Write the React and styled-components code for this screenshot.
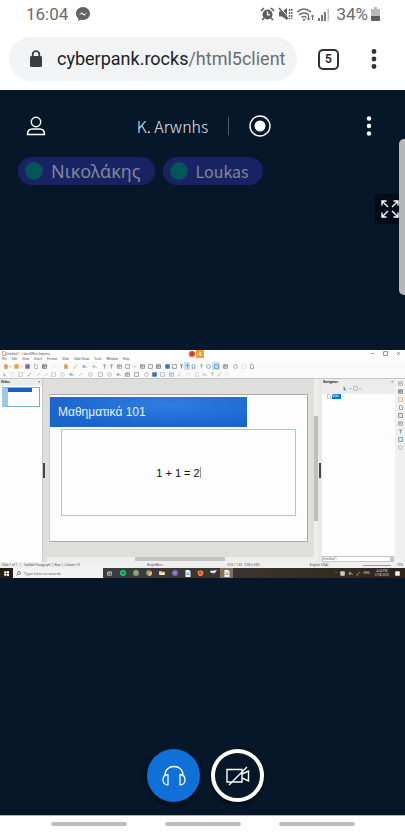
import React from "react";
import styled, { createGlobalStyle } from "styled-components";

const GlobalStyle = createGlobalStyle`
  * { box-sizing: border-box; }
  body { margin: 0; background: #fff; font-family: Roboto, sans-serif; }
  button, input, select { font: inherit; color: inherit; border: 0; padding: 0; margin: 0; background: none; }
  button { cursor: pointer; display: flex; align-items: center; justify-content: center; }
  svg { display: block; flex: none; }
`;

/* ---------- phone shell ---------- */

const Phone = styled.div`
  display: flex;
  flex-direction: column;
  min-height: 100vh;
`;

const StatusBar = styled.div`
  display: flex;
  align-items: center;
  height: 28px;
  padding: 0 25px 0 26px;
  color: #6a6a6a;
  font-size: 17px;
  line-height: 28px;
`;

const Clock = styled.time`
  margin-right: 8px;
`;

const StatusIcons = styled.div`
  display: flex;
  align-items: center;
  gap: 3px;
  margin-left: auto;
`;

const Battery = styled.span`
  margin: 0 0 0 3px;
`;

const BrowserBar = styled.header`
  display: flex;
  align-items: center;
  height: 62px;
  padding: 0 25px 0 9px;
  color: #303134;
`;

const UrlPill = styled.div`
  display: flex;
  align-items: center;
  flex: 1;
  min-width: 0;
  height: 44px;
  padding: 0 6px 0 20px;
  gap: 14px;
  border-radius: 22px;
  background: #f1f3f4;
`;

const Url = styled.a`
  flex: 1;
  min-width: 0;
  white-space: nowrap;
  font-size: 18px;
  line-height: 24px;
  color: #202124;
  text-decoration: none;
`;

const UrlPath = styled.span`
  color: #6b6e72;
`;

const TabCount = styled.button`
  width: 21px;
  height: 21px;
  && { margin: 0 29px 0 21px; border: 2px solid #303134; font-size: 12px; font-weight: 700; }
  border-radius: 5px;
  line-height: 17px;
`;

const MenuButton = styled.button`
  width: 12px;
  height: 28px;
`;

const NavBar = styled.nav`
  display: flex;
  align-items: center;
  justify-content: center;
  gap: 38px;
  height: 18px;
  padding-bottom: 1px;
  border-top: 1px solid #aeb4bc;
`;

const NavHandle = styled.button`
  && { background: #bdbdbd; }
  width: 76px;
  height: 4px;
  border-radius: 2px;
`;

/* ---------- conference ---------- */

const Conference = styled.main`
  position: relative;
  display: flex;
  flex-direction: column;
  flex: 1;
  background: #061729;
  color: #fff;
`;

const TopBar = styled.div`
  display: flex;
  align-items: center;
  justify-content: space-between;
  height: 67px;
  padding: 5px 29px 0 25px;
`;

const IconButton = styled.button`
  width: ${(p) => p.$size}px;
  height: ${(p) => p.$size}px;
`;

const RoomTitle = styled.div`
  display: flex;
  align-items: center;
`;

const RoomName = styled.h1`
  margin: 0;
  font: 300 16px/24px "Noto Sans CJK SC", "Noto Sans", sans-serif;
  color: #e4e8ec;
`;

const Divider = styled.span`
  width: 1px;
  height: 18px;
  margin: 0 19px 0 20px;
  background: #4b5866;
`;

const Talkers = styled.div`
  display: flex;
  gap: 8px;
  padding-left: 18px;
`;

const Talker = styled.button`
  && {
    padding: 0 14px 0 7px;
    background: #182363;
    color: #7e8798;
    font: ${(p) => (p.$greek ? '400 18px/28px "Noto Sans"' : '400 16px/28px "Noto Sans CJK SC"')}, sans-serif;
  }
  gap: 8px;
  height: 28px;
  border-radius: 14px;
`;

const TalkDot = styled.span`
  width: 18px;
  height: 18px;
  border-radius: 50%;
  background: #045459;
`;

const Stage = styled.section`
  display: flex;
  flex-direction: column;
  flex: 1;
`;

const FullscreenButton = styled.button`
  && { margin: 9px 0 126px; background: #020b17; }
  align-self: flex-end;
  width: 30px;
  height: 30px;
  border-radius: 4px;
`;

const ScrollThumb = styled.div`
  position: absolute;
  top: 49px;
  right: 0;
  width: 6px;
  height: 156px;
  border-radius: 5px 0 0 5px;
  background: #b5b7bb;
`;

const Actions = styled.footer`
  display: flex;
  justify-content: center;
  gap: 11px;
  margin-top: auto;
  padding: 0 0 13px 6px;
`;

const ActionButton = styled.button`
  width: 53px;
  height: 53px;
  border-radius: 50%;
  && {
    background: ${(p) => (p.$primary ? "#0f70d7" : "#061729")};
    border: ${(p) => (p.$primary ? "0" : "4px solid #fff")};
  }
  box-shadow: 0 2px 4px #000a;
`;

/* ---------- shared desktop ---------- */

const Desktop = styled.div`
  display: flex;
  flex-direction: column;
  background: #fdfdfd;
  color: #444;
  font: 3px/6px "Noto Sans", sans-serif;
`;

const TitleRow = styled.div`
  display: flex;
  align-items: center;
  height: 7px;
  padding: 0 4px 0 1px;
`;

const WindowTitle = styled.span`
  flex: 1;
`;

const SharingBadge = styled.span`
  display: flex;
  flex: 1;
`;

const BadgePart = styled.span`
  display: flex;
  align-items: center;
  justify-content: center;
  width: 8px;
  height: 8px;
  color: #fff;
  font: 700 5px/8px "Noto Sans", sans-serif;
  background: ${(p) => p.$color};
`;

const WindowControls = styled.span`
  display: flex;
  gap: 8px;
`;

const MenuRow = styled.div`
  display: flex;
  gap: 5px;
  height: 5px;
  padding-left: 2px;
  line-height: 5px;
`;

const MenuItem = styled.button`
  line-height: 5px;
`;

const ToolRow = styled.div`
  display: flex;
  align-items: center;
  height: 8px;
  padding-left: 2px;
  background: #fafafa;
`;

const Tool = styled.button`
  width: ${(p) => p.$width}px;
  height: 8px;
  && { background: ${(p) => (p.$active ? "#c6e0f5" : "none")}; }
`;

const Workspace = styled.div`
  display: flex;
  height: 184px;
  border-top: 1px solid #c4c6c7;
  background: #dededd;
`;

const SlidePanel = styled.aside`
  width: 43px;
  background: #fdfdfd;
  border-right: 1px solid #cacaca;
`;

const PanelTitle = styled.div`
  display: flex;
  justify-content: space-between;
  height: 7px;
  padding: 0 2px 0 1px;
  background: #ececec;
  color: #222;
  font-weight: 700;
  line-height: 7px;
`;

const Thumb = styled.button`
  width: 38px;
  height: 20px;
  && {
    margin: 1px 0 0 2px;
    background: #fff;
    border: 1px solid #7aaec7;
    border-left: 6px solid #9dc8e5;
  }
  align-items: flex-start;
  justify-content: flex-start;
`;

const ThumbTitle = styled.span`
  width: 24px;
  height: 4px;
  background: #1760c7;
`;

const Canvas = styled.div`
  display: flex;
  flex-direction: column;
  flex: 1;
  padding: 15px 6px 0 2px;
`;

const Slide = styled.article`
  height: 148px;
  padding: 2px 11px 0 0;
  background: #fdfdfd;
  border: 1px solid #aaa;
  border-left-color: #ccc;
`;

const SlideTitle = styled.h2`
  width: 80%;
  height: 30px;
  margin: 0;
  padding-left: 8px;
  background: radial-gradient(ellipse at 60% 25%, #2f7de1, #1965cb 75%);
  color: #e6f2ff;
  font: 400 12px/30px "Liberation Sans", sans-serif;
`;

const SlideBody = styled.div`
  display: flex;
  align-items: center;
  justify-content: center;
  height: 87px;
  margin: 2px 0 0 11px;
  border: 1px solid #9fcbe4;
  color: #111;
  font: 400 11px/16px "Liberation Sans", sans-serif;
`;

const Caret = styled.span`
  width: 1px;
  height: 11px;
  background: #999;
`;

const HorizontalTrack = styled.div`
  height: 5px;
  margin: auto -6px 0 -2px;
  padding-left: 88px;
  background: #eeeeed;
`;

const HorizontalThumb = styled.div`
  width: 90px;
  height: 4px;
  background: #c3c3c3;
`;

const VerticalTrack = styled.div`
  width: 4px;
  padding-top: 37px;
  background: #eeeeed;
`;

const VerticalThumb = styled.div`
  height: 105px;
  background: #bfbfbf;
`;

const Splitter = styled.div`
  display: flex;
  align-items: center;
  justify-content: ${(p) => (p.$panel ? "flex-start" : "center")};
  width: 4px;
  background: ${(p) => (p.$panel ? "#dededd" : "#e8e8e8")};
`;

const Grip = styled.span`
  width: 2px;
  height: 15px;
  background: #444;
`;

const NavigatorPanel = styled.aside`
  display: flex;
  flex-direction: column;
  width: 73px;
  background: #ececec;
`;

const NavTools = styled.div`
  display: flex;
  justify-content: center;
  height: 8px;
  padding-right: 12px;
`;

const NavTree = styled.div`
  display: flex;
  gap: 1px;
  flex: 1;
  padding: 0 0 0 4px;
  background: #fdfdfd;
`;

const TreeItem = styled.span`
  width: 9px;
  height: 5px;
  background: #0878d0;
  color: #fff;
  line-height: 5px;
`;

const DocumentSelect = styled.select`
  appearance: none;
  width: 72px;
  height: 6px;
  && { border: 1px solid #c6c6c6; border-right-width: 4px; background: #fff; }
  line-height: 4px;
`;

const Sidebar = styled.aside`
  display: flex;
  flex-direction: column;
  align-items: center;
  gap: 3px;
  width: 10px;
  padding-top: 2px;
  background: #f0f0f0;
`;

const DocStatus = styled.div`
  display: grid;
  grid-template-columns: 145fr 80fr 82fr 53fr 34fr 8fr;
  align-items: center;
  height: 6px;
  padding-left: 2px;
  background: #efefef;
`;

const Zoom = styled.span`
  height: 1px;
  margin-right: 6px;
  background: #999;
`;

const TaskBar = styled.div`
  display: flex;
  align-items: center;
  height: 10px;
  background: linear-gradient(90deg, #393d41 25%, #3b342c 60%, #2f2419);
  color: #ddd;
`;

const StartButton = styled.button`
  width: 13px;
  height: 10px;
  && { background: #251d18; }
`;

const SearchBox = styled.label`
  display: flex;
  align-items: center;
  gap: 3px;
  width: 90px;
  height: 10px;
  padding-left: 3px;
  background: #f2f2f2;
  color: #555;
`;

const SearchInput = styled.input`
  width: 60px;
  height: 8px;
  && { font-size: 4px; }
  &::placeholder { color: #555; opacity: 1; }
`;

const TaskButton = styled.button`
  width: 13px;
  height: 10px;
  && { background: ${(p) => (p.$active ? "#80705f" : "none")}; }
`;

const Tray = styled.div`
  display: flex;
  align-items: center;
  gap: 3px;
  margin-left: auto;
  padding-right: 5px;
`;

const TrayClock = styled.time`
  margin: 0 3px 0 2px;
  line-height: 4px;
  text-align: center;
`;

/* ---------- drawings ---------- */

const Kebab = ({ color, radius }) => (
  <svg width="6" height="22" viewBox="0 0 6 22" fill={color}>
    {[3.5, 11, 18.5].map((y) => <circle key={y} cx="3" cy={y} r={radius} />)}
  </svg>
);

const Messenger = () => (
  <svg width="14" height="14" viewBox="0 0 14 14">
    <path fill="#626262" d="M7 0C3 0 0 3 0 6.600c0 2 .9 3.700 2.300 4.900V14l2.300-1.200c.8.2 1.600.3 2.400.3 4 0 7-2.900 7-6.500S11 0 7 0z" />
    <path d="m2.700 8.500 3.100-3.200 2.300 2 3.200-1.800-3.100 3.200-2.300-2z" fill="#fff" />
  </svg>
);

const Alarm = () => (
  <svg width="15" height="14" viewBox="0 0 15 14" fill="none">
    <circle cx="7.500" cy="7.500" r="5" fill="#5e5e5e" />
    <path d="M1 4 4 1M11 1l3 3M4 11l-2 2M11 11l2 2" stroke="#5e5e5e" strokeWidth="1.700" />
    <path d="M7.500 4.500v3.300H10" stroke="#fff" strokeWidth="1.300" />
  </svg>
);

const Muted = () => (
  <svg width="15" height="14" viewBox="0 0 15 14" fill="none" stroke="#606060">
    <path d="M1 4.500h3L9 1v12L4 9.500H1z" fill="#606060" stroke="none" />
    <path d="m2 0 9 11" stroke="#fff" strokeWidth="1" />
    <path d="m1 1 9 11" strokeWidth="1.500" />
    <path d="M11.500 2v10M13.800 2v10" strokeWidth="1.400" strokeDasharray="2 1" />
  </svg>
);

const Wifi = () => (
  <svg width="19" height="15" viewBox="0 0 19 15" fill="none" stroke="#696969" strokeWidth="1.500">
    <path d="M1 5q7-6 14 0M3 8q5-4 10 0M5.500 10.500q2.500-2 5 0" />
    <path d="m6.500 12.500 1.500-1 1.500 1L8 14z" fill="#696969" stroke="none" />
    <path d="M12.500 8v5m-1.700-1.800 1.700 1.800 1.600-1.800M16.500 13V8m-1.700 1.800L16.500 8l1.600 1.800" strokeWidth="1" />
  </svg>
);

const Signal = () => (
  <svg width="12" height="13" viewBox="0 0 12 13" fill="#777">
    <path d="M0 10h2v3H0zM3 7h2v6H3zM6 4h2v9H6z" />
    <path d="M9.500 1h1.500v12H9.500z" fill="#bbb" />
  </svg>
);

const BatteryIcon = () => (
  <svg width="9" height="14" viewBox="0 0 9 14">
    <path fill="#b9b9b9" d="M3 0h3v2h3v7H0V2h3z" />
    <path fill="#5d5d5d" d="M0 9h9v4q0 1-1 1H1q-1 0-1-1z" />
  </svg>
);

const Lock = () => (
  <svg width="14" height="18" viewBox="0 0 14 18">
    <rect x="1" y="6" width="12" height="11" rx="1.500" fill="#393c40" />
    <path d="M3.700 7V4.500a3.300 3.300 0 0 1 6.600 0V7" fill="none" stroke="#393c40" strokeWidth="1.800" />
  </svg>
);

const User = () => (
  <svg width="20" height="20" viewBox="0 0 20 20" fill="none" stroke="#fff" strokeWidth="1.500">
    <circle cx="10" cy="6" r="4.700" />
    <path d="M1.500 18.500q0-5.500 5-5.500h7q5 0 5 5.500z" />
  </svg>
);

const Record = () => (
  <svg width="22" height="22" viewBox="0 0 22 22">
    <circle cx="11" cy="11" r="10" fill="none" stroke="#fff" strokeWidth="1.400" />
    <circle cx="11" cy="11" r="5.500" fill="#fff" />
  </svg>
);

const Expand = () => (
  <svg width="20" height="20" viewBox="0 0 20 20" fill="none" stroke="#fff" strokeWidth="1.400">
    <path d="M2 6.500V2h4.500M2 2l6 6M13.500 2H18v4.500M18 2l-6 6M2 13.500V18h4.500M2 18l6-6M13.500 18H18v-4.500M18 18l-6-6" />
  </svg>
);

const Headphones = () => (
  <svg width="24" height="22" viewBox="0 0 24 22" fill="none" stroke="#fff" strokeWidth="1.300" strokeLinejoin="round">
    <path d="M3 10.500C3 4.500 7 1.500 12 1.500s9 3 9 9" />
    <path d="M6 9.500v10.300C2.500 20 1 17.500 1 14.700S2.500 9.700 6 9.500zM18 9.500v10.300c3.500.2 5-2.300 5-5.100s-1.500-5-5-5.200z" />
  </svg>
);

const CameraOff = () => (
  <svg width="24" height="20" viewBox="0 0 24 20" fill="none" stroke="#fff" strokeWidth="1.400">
    <path d="M1 3.500h15V16H1zM16 8l6.500-3v10L16 12M3 19 21 1" />
  </svg>
);

const shapes = {
  page: <path d="M1.500.5h2l1 1v3h-3z" />,
  box: <rect x=".7" y=".7" width="3.600" height="3.600" />,
  table: <path d="M.5.8h4v3.500h-4zM.5 2h4M2 .8v3.500" />,
  line: <path d="m1 4 3-3" />,
  tick: <path d="m1.500 2.200 1 1 1-1" />,
  dash: <path d="M1 2.500h3" />,
  cross: <path d="m1 1 3 3M4 1 1 4" />,
  arc: <path d="M.5 2.500 2 1v3zM2 2.300q2-.8 2.500 1.700" />,
  circle: <circle cx="2.500" cy="2.500" r="1.900" />,
  type: <path d="M.8 1h3.400M2.500 1v3.500" />,
  omega: <path d="M.7 4.400h1.200q-2-3.700.6-3.900 2.600.2.600 3.900h1.200" />,
  brush: <path d="M1 4.300 3.800.8M.8 3.500l1 1" />,
  arrow: <path d="M1 .7v3.600l1.200-1 1 1.200" />,
};

const Glyph = ({ shape, color, solid }) => (
  <svg width="5" height="5" viewBox="0 0 5 5" fill={solid ? color : "none"} stroke={color} strokeWidth=".7">
    {shapes[shape]}
  </svg>
);

const ChromeMark = () => (
  <svg width="6" height="6" viewBox="0 0 6 6">
    <circle cx="3" cy="3" r="3" fill="#54a852" />
    <path d="M.4 1.500a3 3 0 0 1 5.200 0L3 3z" fill="#e85245" />
    <path d="M5.600 1.500A3 3 0 0 1 3 6V3z" fill="#f2c642" />
    <circle cx="3" cy="3" r="1.200" fill="#4c8be0" stroke="#fff" strokeWidth=".4" />
  </svg>
);

const Dot = ({ color, inner }) => (
  <svg width="6" height="6" viewBox="0 0 6 6">
    <circle cx="3" cy="3" r="3" fill={color} />
    <path d="M1.500 2.300q1.500-.8 3 .2M1.800 3.500q1.200-.5 2.300.1" stroke={inner} fill="none" strokeWidth=".7" />
  </svg>
);

const Folder = () => (
  <svg width="6" height="6" viewBox="0 0 6 6">
    <path d="M0 1h2l1 .7h3V5H0z" fill="#f3ca57" />
    <path d="M1 3.500h4V5H1z" fill="#eef4fa" />
  </svg>
);

const Fox = () => (
  <svg width="7" height="6" viewBox="0 0 7 6">
    <path d="M1 .8 2.300 1 3.500 0l1 1 1.300-.2L6.500 3 5 6H2L.5 3z" fill="#f28a32" />
    <circle cx="3.200" cy="3" r="1.500" fill="#d73b52" />
  </svg>
);

const Doc = ({ color }) => (
  <svg width="6" height="7" viewBox="0 0 6 7">
    <path d="M.5 0H4l1.500 1.500V7h-5z" fill="#eef5fb" />
    <path d="M1.500 3h3M1.500 4.500h3" stroke={color} strokeWidth=".8" />
  </svg>
);

const Wing = () => (
  <svg width="7" height="6" viewBox="0 0 7 6">
    <path d="M0 1 7 0 5 3H1z" fill="#e5eaf0" />
    <path d="m2 5 2-3 1 2z" fill="#4779aa" />
  </svg>
);

const Windows = () => (
  <svg width="5" height="5" viewBox="0 0 5 5" fill="#fff">
    <path d="M0 .5 2.200.3v2H0zM2.600.2 5 0v2.300H2.600zM0 2.700h2.200v2L0 4.500zM2.600 2.700H5V5l-2.400-.3z" />
  </svg>
);

const Search = () => (
  <svg width="5" height="5" viewBox="0 0 5 5" fill="none" stroke="#444" strokeWidth=".6">
    <circle cx="3" cy="2" r="1.500" /><path d="M2 3 .5 4.600" />
  </svg>
);

/* ---------- data: [shape, colour, cell width, active, solid] ---------- */

const standardTools = [
  ["page", "#e99a55", 6, 0, 1], ["tick", "#888", 5], ["box", "#e8a64d", 7, 0, 1], ["tick", "#888", 3],
  ["box", "#8d65a8", 8, 0, 1], ["page", "#999", 9], ["table", "#555", 8], ["line", "#ddd", 12],
  ["page", "#d7a35c", 11, 0, 1], ["brush", "#e58f35", 9], ["arc", "#4993c6", 9], ["arc", "#a0b1bd", 11],
  ["type", "#777", 8], ["type", "#777", 7], ["table", "#888", 8], ["box", "#888", 8],
  ["tick", "#777", 7], ["table", "#777", 8], ["box", "#777", 8], ["table", "#666", 9],
  ["box", "#377dae", 8, 0, 1], ["box", "#777", 7], ["type", "#555", 6], ["type", "#3583bd", 6, 1],
  ["omega", "#4d87b6", 7], ["type", "#3b9bd2", 8], ["circle", "#6189a4", 7], ["box", "#5087aa", 8, 1],
  ["table", "#777", 11], ["circle", "#888", 9], ["box", "#ddd", 7], ["page", "#888", 9],
];

const drawingTools = [
  ["arrow", "#888", 7], ["circle", "#ddd", 7], ["box", "#bbb", 9], ["brush", "#629bc9", 9],
  ["line", "#aaa", 9], ["line", "#bbb", 6], ["box", "#bbb", 8], ["circle", "#bbb", 10],
  ["arc", "#6697bd", 9], ["line", "#aaa", 9], ["circle", "#aaa", 10], ["box", "#aaa", 10],
  ["circle", "#aaa", 9], ["arc", "#888", 9], ["table", "#888", 9], ["box", "#888", 9],
  ["circle", "#aaa", 10], ["box", "#2d73b4", 6, 0, 1], ["box", "#9ab0c1", 10], ["table", "#90b2c9", 8],
  ["brush", "#ddaa51", 9], ["circle", "#ddd", 8], ["page", "#ccc", 8], ["arc", "#bbb", 8],
  ["type", "#c39d63", 8], ["brush", "#dc9a48", 7, 0, 1], ["circle", "#ddd", 8],
];

const sidebarTools = [
  ["table", "#aaa"], ["table", "#666"], ["box", "#e1a778"], ["page", "#888"], ["box", "#666"],
  ["table", "#999"], ["type", "#347fb8"], ["box", "#3978a8"], ["circle", "#aaa"],
];

const menus = ["File", "Edit", "View", "Insert", "Format", "Slide", "Slide Show", "Tools", "Window", "Help"];

const tasks = [
  ["Task view", <Glyph shape="table" color="#ccc" />],
  ["Music", <Dot color="#20c66a" inner="#163b27" />],
  ["Browser", <Dot color="#8f9a69" inner="#6ec4df" />],
  ["Chrome", <ChromeMark />],
  ["Files", <Folder />],
  ["Viber", <Dot color="#6b69cc" inner="#ed9290" />],
  ["Writer", <Doc color="#3b91cf" />],
  ["Firefox", <Fox />],
  ["Mail", <Wing />],
  ["Impress", <Doc color="#d67445" />],
];

const ToolStrip = ({ tools, label }) => (
  <ToolRow role="toolbar" aria-label={label}>
    {tools.map(([shape, color, width, active, solid], i) => (
      <Tool key={i} $width={width} $active={active} aria-label={shape}>
        <Glyph shape={shape} color={color} solid={solid} />
      </Tool>
    ))}
  </ToolRow>
);

function SharedDesktop() {
  return (
    <Desktop>
      <TitleRow>
        <Glyph shape="page" color="#d9844c" />
        <WindowTitle>Untitled 1 - LibreOffice Impress</WindowTitle>
        <SharingBadge>
          <BadgePart $color="#fff0d8"><Dot color="#e84c38" inner="#ab2c44" /></BadgePart>
          <BadgePart $color="#f4a126">4</BadgePart>
        </SharingBadge>
        <WindowControls>
          <Glyph shape="dash" color="#777" />
          <Glyph shape="box" color="#666" />
          <Glyph shape="cross" color="#777" />
        </WindowControls>
      </TitleRow>
      <MenuRow>{menus.map((name) => <MenuItem key={name}>{name}</MenuItem>)}</MenuRow>
      <ToolStrip tools={standardTools} label="Standard" />
      <ToolStrip tools={drawingTools} label="Drawing" />
      <Workspace>
        <SlidePanel>
          <PanelTitle><span>Slides</span><span>×</span></PanelTitle>
          <Thumb aria-label="Slide 1"><ThumbTitle /></Thumb>
        </SlidePanel>
        <Splitter $panel><Grip /></Splitter>
        <Canvas>
          <Slide>
            <SlideTitle>Μαθηματικά 101</SlideTitle>
            <SlideBody>1 + 1 = 2<Caret /></SlideBody>
          </Slide>
          <HorizontalTrack><HorizontalThumb /></HorizontalTrack>
        </Canvas>
        <VerticalTrack><VerticalThumb /></VerticalTrack>
        <Splitter><Grip /></Splitter>
        <NavigatorPanel>
          <PanelTitle><span>Navigator</span><span>×</span></PanelTitle>
          <NavTools>
            <Glyph shape="arrow" color="#358bc4" solid />
            <Glyph shape="tick" color="#888" />
            <Glyph shape="box" color="#aaa" />
            <Glyph shape="tick" color="#888" />
          </NavTools>
          <NavTree><Glyph shape="page" color="#aaa" /><TreeItem>Slide 1</TreeItem></NavTree>
          <DocumentSelect aria-label="Document"><option>Untitled 1</option></DocumentSelect>
        </NavigatorPanel>
        <Sidebar>{sidebarTools.map(([shape, color], i) => <Glyph key={i} shape={shape} color={color} />)}</Sidebar>
      </Workspace>
      <DocStatus>
        <span>Slide 1 of 1 &nbsp; | &nbsp; TextEdit Paragraph 1, Row 1, Column 10</span>
        <span>BrightBlue</span>
        <span>0.55 / 1.65 &nbsp; 9.00 x 3.60</span>
        <span>English (USA)</span>
        <Zoom />
        <span>70%</span>
      </DocStatus>
      <TaskBar>
        <StartButton aria-label="Start"><Windows /></StartButton>
        <SearchBox><Search /><SearchInput aria-label="Search" placeholder="Type here to search" /></SearchBox>
        {tasks.map(([name, icon]) => (
          <TaskButton key={name} aria-label={name} $active={name === "Impress"}>{icon}</TaskButton>
        ))}
        <Tray>
          <span>^</span>
          <Glyph shape="box" color="#ccc" solid />
          <Glyph shape="arc" color="#bbb" />
          <Glyph shape="brush" color="#bbb" />
          <span>ENG</span>
          <TrayClock>4:04 PM<br />2/18/2020</TrayClock>
          <Glyph shape="box" color="#fff" solid />
        </Tray>
      </TaskBar>
    </Desktop>
  );
}

export default function App() {
  return (
    <Phone>
      <GlobalStyle />
      <StatusBar>
        <Clock>16:04</Clock>
        <Messenger />
        <StatusIcons>
          <Alarm /><Muted /><Wifi /><Signal />
          <Battery>34%</Battery>
          <BatteryIcon />
        </StatusIcons>
      </StatusBar>
      <BrowserBar>
        <UrlPill>
          <Lock />
          <Url href="#">cyberpank.rocks<UrlPath>/html5client</UrlPath></Url>
        </UrlPill>
        <TabCount aria-label="5 tabs">5</TabCount>
        <MenuButton aria-label="Browser menu"><Kebab color="#303134" radius="2.400" /></MenuButton>
      </BrowserBar>
      <Conference>
        <TopBar>
          <IconButton $size={22} aria-label="Users"><User /></IconButton>
          <RoomTitle>
            <RoomName>K. Arwnhs</RoomName>
            <Divider />
            <IconButton $size={24} aria-label="Recording"><Record /></IconButton>
          </RoomTitle>
          <IconButton $size={14} aria-label="Options"><Kebab color="#fff" radius="2.200" /></IconButton>
        </TopBar>
        <Talkers>
          <Talker $greek><TalkDot />Νικολάκης</Talker>
          <Talker><TalkDot />Loukas</Talker>
        </Talkers>
        <Stage>
          <FullscreenButton aria-label="Fullscreen"><Expand /></FullscreenButton>
          <SharedDesktop />
        </Stage>
        <Actions>
          <ActionButton $primary aria-label="Audio"><Headphones /></ActionButton>
          <ActionButton aria-label="Share webcam"><CameraOff /></ActionButton>
        </Actions>
        <ScrollThumb />
      </Conference>
      <NavBar aria-label="System">
        <NavHandle aria-label="Recents" />
        <NavHandle aria-label="Home" />
        <NavHandle aria-label="Back" />
      </NavBar>
    </Phone>
  );
}
